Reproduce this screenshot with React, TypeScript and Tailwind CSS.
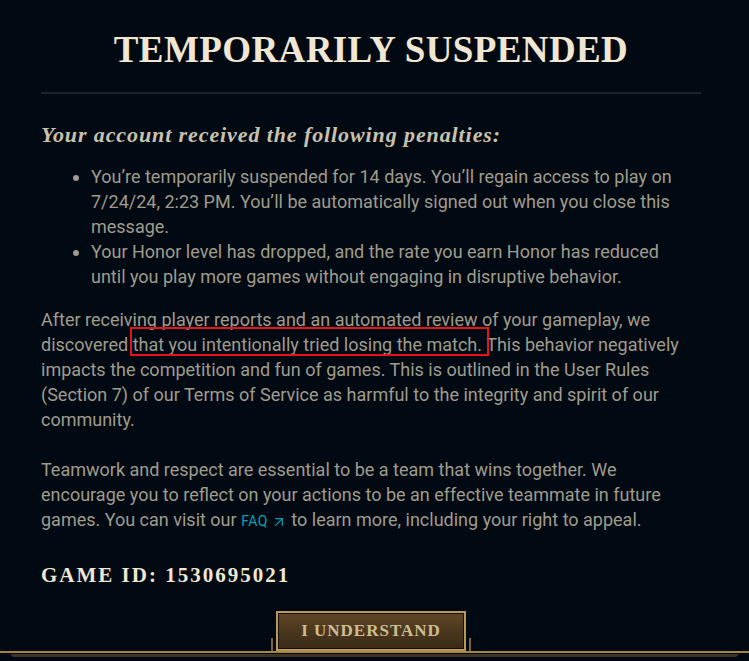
import React from "react";
import { ArrowUpRight } from "lucide-react";

const serif = "font-['Liberation_Serif',serif]";
const body = "font-['Roboto',sans-serif]";

const penalties = [
  "You’re temporarily suspended for 14 days. You’ll regain access to play on 7/24/24, 2:23 PM. You’ll be automatically signed out when you close this message.",
  "Your Honor level has dropped, and the rate you earn Honor has reduced until you play more games without engaging in disruptive behavior.",
];

const App = () => {
  return (
    <div className="h-[661px] w-full overflow-hidden bg-[#010a13] flex flex-col">
      {/* Title */}
      <h1
        className={`${serif} pt-[31px] pr-[7px] text-center text-[37px] leading-[37px] font-bold tracking-[0.4px] text-[#f0e6d2]`}
      >
        TEMPORARILY SUSPENDED
      </h1>
      <div className="mt-[24px] ml-[41px] mr-[48px] h-[2px] bg-[#1e2328]" />

      {/* Content */}
      <div className={`${body} pl-[41px] pr-[57px] text-[18px] leading-[25px] text-[#a09b8c]`}>
        <h2
          className={`${serif} mt-[28px] text-[22px] leading-[25px] font-bold italic tracking-[0.9px] text-[#c9c1ad]`}
        >
          Your account received the following penalties:
        </h2>

        <ul className="mt-[17px] list-disc pl-[50px]">
          {penalties.map((p) => (
            <li key={p}>{p}</li>
          ))}
        </ul>

        <p className="mt-[18px]">
          After receiving player reports and an automated review of your gameplay, we discovered{" "}
          <span className="relative">
            that you intentionally tried losing the match.
            <span className="pointer-events-none absolute left-[-3px] right-[-7px] top-[-7px] bottom-[-1px] border-2 border-[#e3141c]" />
          </span>{" "}
          This behavior negatively impacts the competition and fun of games. This is outlined in the
          User Rules (Section 7) of our Terms of Service as harmful to the integrity and spirit of
          our community.
        </p>

        <p className="mt-[25px]">
          Teamwork and respect are essential to be a team that wins together. We encourage you to
          reflect on your actions to be an effective teammate in future games. You can visit our{" "}
          <a className="inline-flex items-center gap-[3px] text-[14px] tracking-[0.5px] text-[#0b9fb1]">
            FAQ
            <ArrowUpRight size={16} strokeWidth={1.8} />
          </a>{" "}
          to learn more, including your right to appeal.
        </p>

        <div
          className={`${serif} mt-[29px] text-[21px] leading-[25px] font-bold tracking-[2px] text-[#f0e6d2]`}
        >
          GAME ID: 1530695021
        </div>
      </div>

      {/* Footer with button */}
      <div className="mt-auto flex flex-col">
        <div className="flex items-end justify-center gap-[3px] pr-[7px]">
          <div className="h-[13px] w-[2px] bg-[#7f6331]" />
          <button className="h-[40px] w-[190px] border-2 border-[#b8995a] bg-[#15120d] p-[1px]">
            <div
              className={`${serif} flex h-full w-full items-center justify-center bg-linear-to-b from-[#5e4525] to-[#3a2a17] text-[17px] font-bold tracking-[1px] text-[#cdbe91]`}
            >
              I UNDERSTAND
            </div>
          </button>
          <div className="h-[13px] w-[2px] bg-[#7f6331]" />
        </div>
        <div className="h-[2px] bg-[#a7853f]" />
        <div className="mt-[1px] mx-[10px] h-[3px] bg-[#3e3322] [clip-path:polygon(0_0,100%_0,calc(100%-3px)_100%,3px_100%)]" />
        <div className="h-[4px]" />
      </div>
    </div>
  );
};

export default App;
